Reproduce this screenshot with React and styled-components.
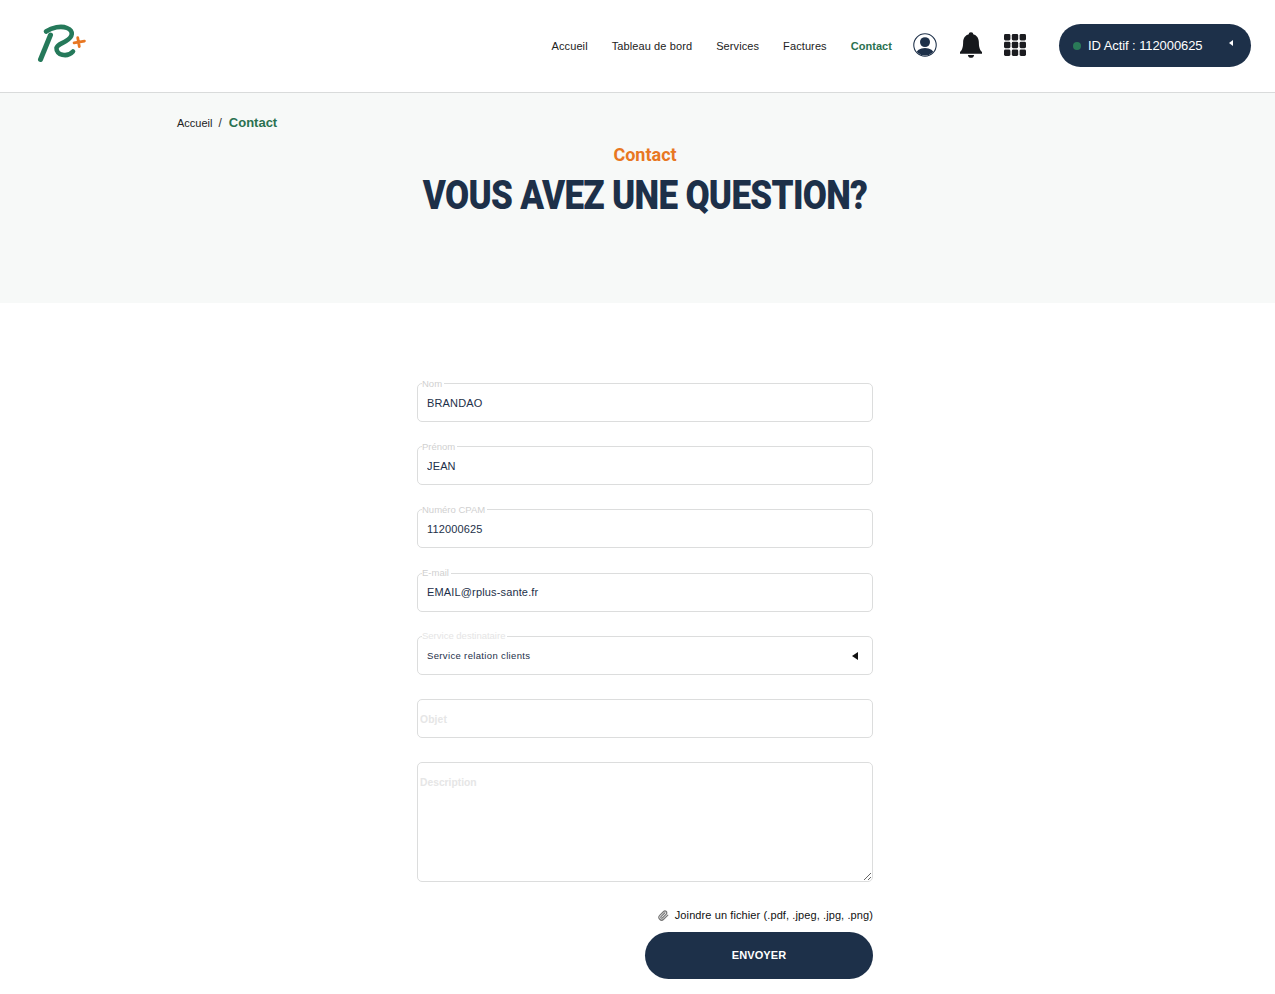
import React from "react";
import styled, { createGlobalStyle } from "styled-components";

const Global = createGlobalStyle`
  html, body { margin: 0; padding: 0; background: #fff; }
  body { font-family: "Liberation Sans", Arial, sans-serif; color: #1d3049; }
  * { box-sizing: border-box; }
`;

const Header = styled.header`
  height: 93px;
  border-bottom: 1px solid #d9dbdb;
  display: flex;
  align-items: center;
  justify-content: space-between;
  padding: 0 24px 2px 37px;
  background: #fff;
`;
const Logo = styled.svg`
  width: 50px;
  height: 42px;
  align-self: flex-start;
  margin-top: 22px;
`;
const Right = styled.div`
  display: flex;
  align-items: center;
`;
const Nav = styled.nav`
  display: flex;
  align-items: center;
  gap: 24px;
  padding-top: 2px;
`;
const NavLink = styled.a`
  font-size: 11px;
  letter-spacing: ${(p) => (p.$active ? "0.05px" : "0.1px")};
  color: ${(p) => (p.$active ? "#2a7150" : "#222")};
  font-weight: ${(p) => (p.$active ? 700 : 400)};
`;
const Icons = styled.div`
  display: flex;
  align-items: center;
  gap: 22.5px;
  margin-left: 21px;
  margin-right: 33px;
`;
const Pill = styled.div`
  width: 192px;
  height: 43px;
  border-radius: 22px;
  background: #1d3049;
  color: #fff;
  display: flex;
  align-items: center;
  padding: 0 0 0 14px;
  position: relative;
`;
const Dot = styled.span`
  width: 8px;
  height: 8px;
  border-radius: 50%;
  background: #2a7a58;
  margin-right: 7px;
  margin-top: 2px;
`;
const PillText = styled.span`
  font-size: 13px;
  letter-spacing: -0.08px;
  line-height: 1;
`;
const PillCaret = styled.span`
  position: absolute;
  left: 170px;
  top: 16px;
  width: 0;
  height: 0;
  border-top: 3px solid transparent;
  border-bottom: 3px solid transparent;
  border-right: 4px solid #fff;
`;

const Hero = styled.section`
  height: 210px;
  background: #f7f9f8;
  padding: 22px 0 0 177px;
`;
const Crumbs = styled.div`
  display: flex;
  align-items: baseline;
  gap: 6px;
  font-size: 11px;
  color: #222;
  line-height: 16px;
`;
const CrumbSep = styled.span`
  font-size: 12px;
  color: #333;
`;
const CrumbNow = styled.span`
  font-size: 13px;
  font-weight: 700;
  color: #2a7150;
  margin-left: 1px;
`;
const HeroTitles = styled.div`
  margin: 12px 0 0 -162px;
  text-align: center;
`;
const Eyebrow = styled.div`
  font-family: Roboto, sans-serif;
  font-weight: 700;
  font-size: 18px;
  line-height: 24px;
  color: #e87722;
`;
const Title = styled.h1`
  margin: 7px 0 0;
  font-family: Roboto, sans-serif;
  font-weight: 900;
  font-size: 40px;
  line-height: 44px;
  color: #1d3049;
  letter-spacing: -0.8px;
  white-space: nowrap;
  display: inline-block;
  transform: scaleX(0.875);
`;

const Form = styled.form`
  width: 456px;
  margin: 80px 0 0 417px;
  padding-bottom: 15px;
  display: flex;
  flex-direction: column;
  gap: 24.2px;
`;
const Field = styled.div`
  position: relative;
  height: ${(p) => p.$h || 39}px;
  border: 1px solid #dcdddd;
  border-radius: 5px;
  background: #fff;
  display: flex;
  align-items: center;
`;
const Legend = styled.span`
  position: absolute;
  top: -6.4px;
  left: 4px;
  padding-right: 2px;
  font-size: 9.5px;
  line-height: 11px;
  background: #fff;
  color: ${(p) => p.$c || "#d0d0d0"};
`;
const Input = styled.input`
  border: 0;
  outline: 0;
  background: transparent;
  width: 100%;
  height: 100%;
  padding: ${(p) => (p.$flush ? "2px 2px 0" : "0 9px")};
  font-family: "Liberation Sans", sans-serif;
  font-size: 11px;
  letter-spacing: 0.15px;
  color: #1d3049;
  &::placeholder { color: #e6e6e6; font-weight: 700; font-size: 10.3px; }
`;
const SelectText = styled.span`
  font-size: 9.5px;
  letter-spacing: 0.35px;
  color: #1d3049;
  margin-left: 9px;
`;
const SelectCaret = styled.span`
  position: absolute;
  right: 14px;
  top: 15px;
  width: 0;
  height: 0;
  border-top: 4px solid transparent;
  border-bottom: 4px solid transparent;
  border-right: 6px solid #111;
`;
const Area = styled.textarea`
  border: 0;
  outline: 0;
  background: transparent;
  width: 100%;
  height: 100%;
  padding: 14px 2px;
  border-radius: 5px;
  resize: vertical;
  display: block;
  font-family: "Liberation Sans", sans-serif;
  &::placeholder { color: #e6e6e6; font-weight: 700; font-size: 10.3px; }
`;
const Attach = styled.div`
  display: flex;
  justify-content: flex-end;
  align-items: center;
  gap: 6px;
  margin-top: 1.8px;
  font-size: 11px;
  letter-spacing: 0.1px;
  color: #111;
  line-height: 14px;
`;
const Send = styled.button`
  align-self: flex-end;
  width: 228px;
  height: 47px;
  margin-top: -14.2px;
  padding: 0 0 2px;
  border: 0;
  border-radius: 24px;
  background: #1d3049;
  color: #fff;
  font-family: "Liberation Sans", sans-serif;
  font-weight: 700;
  font-size: 11px;
  letter-spacing: 0.1px;
`;

const fields = [
  ["Nom", "BRANDAO"],
  ["Prénom", "JEAN"],
  ["Numéro CPAM", "112000625"],
  ["E-mail", "EMAIL@rplus-sante.fr"],
];

export default function App() {
  return (
    <>
      <Global />
      <Header>
        <Logo viewBox="0 0 50 42" fill="none">
          <path d="M3.5 37.5 L13.5 13" stroke="#25795a" strokeWidth="5" strokeLinecap="round" />
          <path d="M9 9.5 C15 5.5 24 3.5 30 6 C37 9 36 15 29 19 C24 22 20 23 19.5 26 C19 33 30 36 36 29.5" stroke="#25795a" strokeWidth="4.6" strokeLinecap="round" />
          <path d="M41.5 15.5 V24.5 M37 20 H47.5" stroke="#e87722" strokeWidth="2.8" strokeLinecap="round" transform="rotate(-10 42 20)" />
        </Logo>
        <Right>
          <Nav>
            <NavLink>Accueil</NavLink>
            <NavLink>Tableau de bord</NavLink>
            <NavLink>Services</NavLink>
            <NavLink>Factures</NavLink>
            <NavLink $active>Contact</NavLink>
          </Nav>
          <Icons>
            <svg width="24" height="24" viewBox="0 0 25 25">
              <defs>
                <clipPath id="uc"><circle cx="12.5" cy="12.5" r="11" /></clipPath>
              </defs>
              <circle cx="12.5" cy="12.5" r="11.7" fill="#fff" stroke="#1d3049" strokeWidth="1.1" />
              <circle cx="12.5" cy="9.5" r="5.2" fill="#1d3049" />
              <ellipse cx="12.5" cy="22" rx="9.5" ry="6.5" fill="#1d3049" clipPath="url(#uc)" />
            </svg>
            <svg width="22" height="26" viewBox="2 1.2 21 25" preserveAspectRatio="none">
              <path d="M12.5 1.5 C14 1.5 14.6 2.4 14.6 3.3 C18 4.3 20 7 20 11 C20 16 21 18.5 23 20.5 L23 22 L2 22 L2 20.5 C4 18.5 5 16 5 11 C5 7 7 4.3 10.4 3.3 C10.4 2.4 11 1.5 12.5 1.5 Z" fill="#16181c" />
              <path d="M9.5 23.2 H15.5 C15.2 25 14 26 12.5 26 C11 26 9.8 25 9.5 23.2 Z" fill="#16181c" />
            </svg>
            <svg width="22" height="22" viewBox="0 0 22 22" fill="#1b1c20">
              {[0, 7.8, 15.6].flatMap((y) =>
                [0, 7.8, 15.6].map((x) => <rect key={`${x}-${y}`} x={x} y={y} width="6.4" height="6.4" rx="1.4" />)
              )}
            </svg>
          </Icons>
          <Pill>
            <Dot />
            <PillText>ID Actif : 112000625</PillText>
            <PillCaret />
          </Pill>
        </Right>
      </Header>
      <Hero>
        <Crumbs>
          <span>Accueil</span>
          <CrumbSep>/</CrumbSep>
          <CrumbNow>Contact</CrumbNow>
        </Crumbs>
        <HeroTitles>
          <Eyebrow>Contact</Eyebrow>
          <Title>VOUS AVEZ UNE QUESTION?</Title>
        </HeroTitles>
      </Hero>
      <Form onSubmit={(e) => e.preventDefault()}>
        {fields.map(([l, v]) => (
          <Field key={l}>
            <Legend>{l}</Legend>
            <Input readOnly defaultValue={v} />
          </Field>
        ))}
        <Field>
          <Legend $c="#e5e5e5">Service destinataire</Legend>
          <SelectText>Service relation clients</SelectText>
          <SelectCaret />
        </Field>
        <Field>
          <Input $flush placeholder="Objet" />
        </Field>
        <Field $h={120}>
          <Area placeholder="Description" />
        </Field>
        <Attach>
          <svg width="11" height="11" viewBox="0 0 24 24" fill="none" stroke="#777" strokeWidth="2.6" strokeLinecap="round" strokeLinejoin="round">
            <path d="m21.44 11.05-9.19 9.19a6 6 0 0 1-8.49-8.49l8.57-8.57A4 4 0 1 1 18 8.84l-8.59 8.57a2 2 0 0 1-2.83-2.83l8.49-8.48" />
          </svg>
          <span>Joindre un fichier (.pdf, .jpeg, .jpg, .png)</span>
        </Attach>
        <Send type="button">ENVOYER</Send>
      </Form>
    </>
  );
}
